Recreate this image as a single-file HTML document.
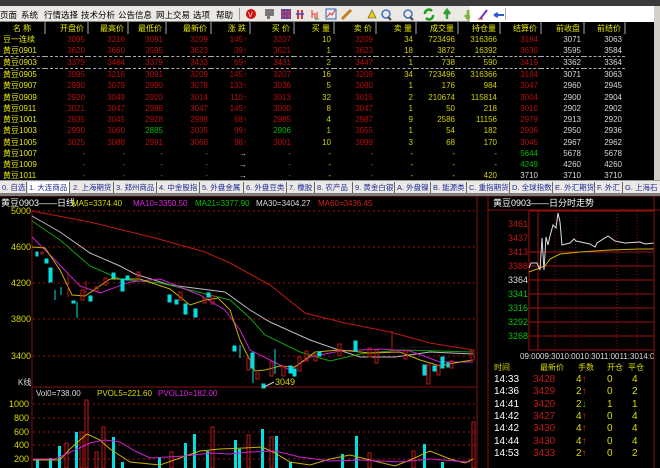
<!DOCTYPE html>
<html><head><meta charset="utf-8"><style>
*{margin:0;padding:0;box-sizing:border-box}
body{width:660px;height:468px;background:#000;overflow:hidden;position:relative;font-family:"Liberation Sans","Noto Sans CJK SC",sans-serif;font-size:9px}
.a{position:absolute;white-space:nowrap}
#top{left:0;top:0;width:660px;height:6px;background:#3a3a3a}
#menu{left:0;top:6px;width:660px;height:16px;background:#ece9e4;border-bottom:1px solid #888}
#menu span{position:absolute;top:3px;font-size:8.5px;color:#000;letter-spacing:0}
#tbl{left:0;top:22px;width:654px}
table{border-collapse:collapse;table-layout:fixed}
td{height:11.25px;line-height:11px;text-align:right;padding-right:3px;font-size:8px;font-family:"Liberation Sans","Noto Sans CJK SC",sans-serif}
tr.h td{height:12px;color:#e8e800;background:#000;border-right:2px solid #555;font-size:8px}
td.n{text-align:left;padding-left:3px;color:#e8e800}
.r{color:#b80c0c}.y{color:#d0d000}.w{color:#d8d8d8}.g{color:#00b800}
tr.sel td{border-top:1px dashed #aaa;border-bottom:1px dashed #aaa}
#sb{left:654px;top:6px;width:6px;height:174px;background:#d4d0c8}
#tabs{left:0;top:180px;width:660px;height:13px;background:#ece9e4;border-top:1px solid #999;overflow:hidden}
#tabs span{position:absolute;top:1px;height:11px;font-size:7.5px;color:#1a2a9a;border-right:1px solid #666;padding:0 1px;line-height:11px;overflow:hidden}
</style></head><body>
<div class="a" id="top"></div>
<div class="a" id="menu">
<span style="left:0">页面</span><span style="left:21px">系统</span><span style="left:44px">行情选择</span><span style="left:81px">技术分析</span><span style="left:118px">公告信息</span><span style="left:156px">网上交易</span><span style="left:193px">选项</span><span style="left:216px">帮助</span>
</div>
<div class="a" style="left:470px;top:6px;width:186px;height:16px;background:#fff"></div>
<div class="a" style="left:239px;top:8px;width:1px;height:12px;background:#999"></div>
<svg class="a" style="left:240px;top:6px" width="230" height="16">
<circle cx="11" cy="8" r="5" fill="#d01010"/><text x="8" y="11" font-size="7" fill="#fff" font-family="Liberation Sans">V</text>
<rect x="25" y="3" width="9" height="7" fill="#777"/><rect x="27" y="10" width="3" height="3" fill="#777"/>
<rect x="41" y="3" width="10" height="10" fill="#2050d0"/><path d="M43 3v10M46 3v10M49 3v10M41 6h10M41 10h10" stroke="#f33" stroke-width="1"/>
<path d="M58 4v9M62 4v9" stroke="#e03030" stroke-width="2"/><path d="M56 8h8" stroke="#3050e0" stroke-width="1.5"/>
<path d="M72 12V4M72 8h3v5M77 6v7" stroke="#e03030" fill="none"/><path d="M75 13h4" stroke="#2a2"/>
<rect x="86" y="3" width="10" height="10" fill="none" stroke="#3060c0"/><path d="M87 11l3-4 2 2 3-5" stroke="#e03030" fill="none"/>
<path d="M102 13l9-9" stroke="#c08020" stroke-width="3"/>
<path d="M128 12l4-8 4 8z" fill="#f0d000" stroke="#444" stroke-width=".6"/>
<circle cx="146" cy="8" r="4" fill="none" stroke="#4070c0" stroke-width="1.5"/><path d="M148 11l3 3" stroke="#444" stroke-width="2"/>
<circle cx="168" cy="8" r="4" fill="none" stroke="#4070c0" stroke-width="1.5"/><path d="M170 11l3 3" stroke="#444" stroke-width="2"/>
<path d="M185 8a4 4 0 0 1 7-3M193 9a4 4 0 0 1-7 3" stroke="#20a020" stroke-width="2.5" fill="none"/>
<path d="M207 13V6M204 8l3-4 3 4" stroke="#30a030" stroke-width="2.5" fill="none"/>
<path d="M228 4v7M225 9l3 4 3-4" stroke="#80b040" stroke-width="2.5" fill="none"/>
</svg>
<svg class="a" style="left:470px;top:6px" width="60" height="16"><path d="M10 13l7-9" stroke="#7030c0" stroke-width="2"/><path d="M8 13h5" stroke="#d02020"/><path d="M24 9h10M24 9l4-2M24 9l4 2" stroke="#3060d0" stroke-width="2"/></svg>
<div class="a" style="left:505px;top:8px;width:1px;height:12px;background:#aaa"></div>
<div class="a" id="sb"></div>

<div class="a" id="tbl"><table>
<colgroup><col style="width:45px"><col style="width:43px"><col style="width:40px"><col style="width:38px"><col style="width:45px"><col style="width:39px"><col style="width:44px"><col style="width:40px"><col style="width:42px"><col style="width:40px"><col style="width:42px"><col style="width:42px"><col style="width:41px"><col style="width:43px"><col style="width:41px"></colgroup>
<tr class="h"><td class="n" style="text-align:center">名 称</td><td>开盘价</td><td>最高价</td><td>最低价</td><td>最新价</td><td>涨 跌</td><td>买 价</td><td>买 量</td><td>卖 价</td><td>卖 量</td><td>成交量</td><td>持仓量</td><td>结算价</td><td>前收盘</td><td>前结价</td></tr>
<tr><td class="n">豆一连续</td><td class="r">3095</td><td class="r">3216</td><td class="r">3091</td><td class="r">3209</td><td class="r">145↑</td><td class="r">3207</td><td class="y">10</td><td class="r">3209</td><td class="y">34</td><td class="y">723496</td><td class="y">316366</td><td class="r">3184</td><td class="w">3071</td><td class="w">3063</td></tr>
<tr><td class="n">黄豆0901</td><td class="r">3620</td><td class="r">3660</td><td class="r">3595</td><td class="r">3623</td><td class="r">39↑</td><td class="r">3621</td><td class="y">1</td><td class="r">3623</td><td class="y">18</td><td class="y">3872</td><td class="y">16392</td><td class="r">3630</td><td class="w">3595</td><td class="w">3584</td></tr>
<tr class="sel"><td class="n">黄豆0903</td><td class="r">3379</td><td class="r">3484</td><td class="r">3379</td><td class="r">3433</td><td class="r">69↑</td><td class="r">3431</td><td class="y">2</td><td class="r">3447</td><td class="y">1</td><td class="y">738</td><td class="y">590</td><td class="r">3419</td><td class="w">3362</td><td class="w">3364</td></tr>
<tr><td class="n">黄豆0905</td><td class="r">3095</td><td class="r">3216</td><td class="r">3091</td><td class="r">3209</td><td class="r">145↑</td><td class="r">3207</td><td class="y">16</td><td class="r">3209</td><td class="y">34</td><td class="y">723496</td><td class="y">316366</td><td class="r">3184</td><td class="w">3071</td><td class="w">3063</td></tr>
<tr><td class="n">黄豆0907</td><td class="r">2990</td><td class="r">3079</td><td class="r">2990</td><td class="r">3078</td><td class="r">133↑</td><td class="r">3036</td><td class="y">5</td><td class="r">3080</td><td class="y">1</td><td class="y">176</td><td class="y">984</td><td class="r">3047</td><td class="w">2960</td><td class="w">2945</td></tr>
<tr><td class="n">黄豆0909</td><td class="r">2920</td><td class="r">3049</td><td class="r">2920</td><td class="r">3014</td><td class="r">110↑</td><td class="r">3013</td><td class="y">32</td><td class="r">3015</td><td class="y">2</td><td class="y">210674</td><td class="y">115814</td><td class="r">3004</td><td class="w">2900</td><td class="w">2904</td></tr>
<tr><td class="n">黄豆0911</td><td class="r">3021</td><td class="r">3047</td><td class="r">2988</td><td class="r">3047</td><td class="r">145↑</td><td class="r">3000</td><td class="y">8</td><td class="r">3047</td><td class="y">1</td><td class="y">50</td><td class="y">218</td><td class="r">3010</td><td class="w">2902</td><td class="w">2902</td></tr>
<tr><td class="n">黄豆1001</td><td class="r">2935</td><td class="r">3045</td><td class="r">2928</td><td class="r">2988</td><td class="r">68↑</td><td class="r">2985</td><td class="y">4</td><td class="r">2987</td><td class="y">9</td><td class="y">2586</td><td class="y">11156</td><td class="r">2979</td><td class="w">2913</td><td class="w">2920</td></tr>
<tr><td class="n">黄豆1003</td><td class="r">2990</td><td class="r">3060</td><td class="g">2885</td><td class="r">3035</td><td class="r">99↑</td><td class="g">2906</td><td class="y">1</td><td class="r">3055</td><td class="y">1</td><td class="y">54</td><td class="y">182</td><td class="r">2906</td><td class="w">2950</td><td class="w">2936</td></tr>
<tr><td class="n">黄豆1005</td><td class="r">3025</td><td class="r">3088</td><td class="r">2991</td><td class="r">3060</td><td class="r">98↑</td><td class="r">3001</td><td class="y">10</td><td class="r">3099</td><td class="y">3</td><td class="y">68</td><td class="y">170</td><td class="r">3045</td><td class="w">2967</td><td class="w">2962</td></tr>
<tr><td class="n">黄豆1007</td><td class="g">-</td><td class="g">-</td><td class="g">-</td><td class="g">-</td><td class="w">→</td><td class="g">-</td><td class="y">-</td><td class="g">-</td><td class="y">-</td><td class="y">-</td><td class="y">-</td><td class="g">5644</td><td class="w">5678</td><td class="w">5678</td></tr>
<tr><td class="n">黄豆1009</td><td class="g">-</td><td class="g">-</td><td class="g">-</td><td class="g">-</td><td class="w">→</td><td class="g">-</td><td class="y">-</td><td class="g">-</td><td class="y">-</td><td class="y">-</td><td class="y">-</td><td class="g">4249</td><td class="w">4260</td><td class="w">4260</td></tr>
<tr><td class="n">黄豆1011</td><td class="g">-</td><td class="g">-</td><td class="g">-</td><td class="g">-</td><td class="w">→</td><td class="g">-</td><td class="y">-</td><td class="g">-</td><td class="y">-</td><td class="y">-</td><td class="y">420</td><td class="w">3710</td><td class="w">3710</td><td class="w">3710</td></tr>
</table></div>

<div class="a" id="tabs">
<span style="left:1px;width:26px">0. 自选</span><span style="left:28px;width:42px;background:#fff">1. 大连商品</span><span style="left:72px;width:42px">2. 上海期货</span><span style="left:115px;width:42px">3. 郑州商品</span><span style="left:158px;width:42px">4. 中金股指</span><span style="left:201px;width:43px">5. 外盘金属</span><span style="left:245px;width:42px">6. 外盘豆类</span><span style="left:288px;width:27px">7. 橡胶</span><span style="left:316px;width:37px">8. 农产品</span><span style="left:354px;width:41px">9. 黄金白银</span><span style="left:396px;width:35px">A. 外盘镍</span><span style="left:432px;width:35px">B. 能源类</span><span style="left:468px;width:42px">C. 重指期货</span><span style="left:511px;width:42px">D. 全球指数</span><span style="left:554px;width:41px">E. 外汇期货</span><span style="left:596px;width:27px">F. 外汇</span><span style="left:624px;width:40px">G. 上海石</span>
</div>
<div class="a" style="left:0;top:193px;width:660px;height:3px;background:#808080"></div>

<svg class="a" style="left:0;top:196px" width="660" height="272" font-family="Liberation Sans,Noto Sans CJK SC,sans-serif">
<g transform="translate(0,-196)">
<text x="1" y="206" fill="#fff" font-size="9">黄豆0903——日线</text>
<text x="72" y="206" fill="#dada00" font-size="8">MA5=3374.40</text>
<text x="133" y="206" fill="#e020e0" font-size="8">MA10=3350.50</text>
<text x="195" y="206" fill="#00c000" font-size="8">MA21=3377.90</text>
<text x="256" y="206" fill="#ddd" font-size="8">MA30=3404.27</text>
<text x="318" y="206" fill="#d02020" font-size="8">MA60=3436.45</text>
<path d="M32 210V468M32 387H477M477 196V468M488 196V468M0 196H660M488 210H660" stroke="#8a1010" stroke-width="1" fill="none"/>
<g stroke="#a01010" stroke-dasharray="2,3" stroke-width="1">
<path d="M33 211H475M33 247H475M33 283H475M33 319H475M33 356H475M33 404H475M33 418H475M33 432H475M33 445H475M33 459H475"/>
</g>
<g fill="#dada00" font-size="9" text-anchor="end">
<text x="31" y="214">5000</text><text x="31" y="250">4600</text><text x="31" y="286">4200</text><text x="31" y="322">3800</text><text x="31" y="359">3400</text>
<text x="29" y="407">1000</text><text x="29" y="421">800</text><text x="29" y="435">600</text><text x="29" y="448">400</text><text x="29" y="462">200</text>
</g>
<text x="18" y="385" fill="#ddd" font-size="8">K线</text>
<text x="36" y="396" fill="#ddd" font-size="8">Vol0=738.00</text>
<text x="97" y="396" fill="#dada00" font-size="8">PVOL5=221.60</text>
<text x="158" y="396" fill="#e020e0" font-size="8">PVOL10=182.00</text>
<g fill="none" stroke-width="1">
<polyline stroke="#c01818" points="32,211 90,222 155,238 205,252 230,263 270,285 305,313 345,323 390,332 430,343 473,350"/>
<polyline stroke="#bbb" points="32,216 60,232 90,253 120,266 135,274 170,285 225,292 250,310 270,322 310,340 330,347 360,357 395,357 430,352 473,354"/>
<polyline stroke="#10a010" points="32,221 60,240 90,266 120,279 160,283 190,290 230,300 250,318 265,335 300,352 330,361 360,354 400,350 440,351 473,352"/>
<polyline stroke="#d020d0" points="32,237 55,260 80,286 100,293 130,282 160,279 200,295 225,310 240,330 250,350 270,360 290,370 310,357 340,351 380,349 410,351 440,362 473,362"/>
<polyline stroke="#c8b000" points="32,247 45,248 60,270 72,295 85,296 110,279 140,279 170,289 190,305 205,300 218,298 230,310 240,340 255,371 265,370 280,366 295,367 315,352 340,350 370,353 400,352 420,360 440,366 460,362 473,360"/>
</g>
<g stroke="#00e0e0" fill="#00e0e0">
<rect x="36" y="252" width="2" height="4"/><rect x="45" y="259" width="3" height="4"/><rect x="49" y="268" width="3" height="14"/><path d="M55 290v10M61 287v8M77 302v16"/><rect x="72" y="301" width="3" height="2"/><rect x="89" y="296" width="3" height="5"/><rect x="112" y="273" width="3" height="5"/><rect x="121" y="279" width="3" height="12"/><rect x="126" y="276" width="3" height="4"/><rect x="168" y="295" width="3" height="7"/><rect x="175" y="300" width="3" height="4"/><rect x="184" y="304" width="3" height="10"/><rect x="194" y="309" width="3" height="8"/><rect x="207" y="293" width="3" height="4"/><rect x="233" y="346" width="3" height="5"/><path d="M240 345v13M253 353v30M275 349v25"/><rect x="251" y="353" width="3" height="15"/><rect x="262" y="384" width="3" height="4"/><rect x="289" y="366" width="3" height="7"/><rect x="293" y="369" width="3" height="7"/><rect x="318" y="352" width="3" height="4"/><rect x="354" y="341" width="3" height="10"/><rect x="423" y="365" width="3" height="10"/><rect x="433" y="366" width="3" height="5"/><rect x="441" y="357" width="3" height="11"/><rect x="447" y="363" width="3" height="4"/>
</g>
<g stroke="#c01818" fill="none">
<rect x="41" y="252" width="2" height="2"/><path d="M68 272v25"/><rect x="81" y="290" width="3" height="10"/><path d="M86 281v12"/><rect x="95" y="287" width="3" height="4"/><rect x="104" y="278" width="3" height="7"/><rect x="137" y="272" width="3" height="5"/><rect x="179" y="292" width="3" height="8"/><rect x="203" y="298" width="3" height="5"/><rect x="211" y="296" width="3" height="8"/><rect x="247" y="358" width="3" height="12"/><rect x="256" y="373" width="3" height="6"/><rect x="270" y="362" width="3" height="14"/><rect x="282" y="366" width="3" height="10"/><rect x="298" y="357" width="3" height="14"/><rect x="305" y="351" width="3" height="10"/><rect x="314" y="354" width="3" height="7"/><rect x="338" y="344" width="3" height="12"/><rect x="368" y="348" width="3" height="9"/><rect x="375" y="350" width="3" height="13"/><path d="M392 331v22"/><rect x="404" y="351" width="3" height="8"/><rect x="427" y="365" width="3" height="19"/><rect x="437" y="365" width="3" height="10"/><rect x="450" y="361" width="3" height="7"/><rect x="471" y="350" width="3" height="10"/>
</g>
<path d="M264 387l10-5" stroke="#ccc"/><text x="275" y="385" fill="#dada00" font-size="9">3049</text>
<g fill="#00e0e0">
<rect x="36" y="459" width="3" height="9"/><rect x="49" y="458" width="3" height="10"/><rect x="58" y="446" width="3" height="22"/><rect x="75" y="432" width="3" height="36"/><rect x="112" y="437" width="3" height="31"/><rect x="121" y="462" width="3" height="6"/><rect x="158" y="457" width="3" height="11"/><rect x="184" y="443" width="3" height="25"/><rect x="193" y="434" width="3" height="34"/><rect x="206" y="451" width="3" height="17"/><rect x="234" y="440" width="3" height="28"/><rect x="238" y="449" width="3" height="19"/><rect x="261" y="429" width="3" height="39"/><rect x="275" y="436" width="3" height="32"/><rect x="289" y="462" width="3" height="6"/><rect x="341" y="454" width="3" height="14"/><rect x="355" y="436" width="3" height="32"/><rect x="423" y="444" width="3" height="24"/><rect x="441" y="462" width="3" height="6"/></g>
<g fill="none" stroke="#c01818">
<rect x="65" y="443" width="3" height="25"/><rect x="80" y="432" width="3" height="36"/><rect x="85" y="400" width="3" height="68"/><rect x="95" y="452" width="3" height="16"/><rect x="102" y="427" width="3" height="41"/><rect x="170" y="452" width="3" height="16"/><rect x="211" y="427" width="3" height="41"/><rect x="247" y="435" width="3" height="33"/><rect x="270" y="437" width="3" height="31"/><rect x="368" y="453" width="3" height="15"/><rect x="412" y="451" width="3" height="17"/><rect x="472" y="422" width="3" height="46"/></g>
<polyline fill="none" stroke="#c8b000" points="33,460 60,460 70,449 80,440 87,434 100,440 110,449 130,462 160,465 180,458 200,451 220,449 245,448 262,447 275,453 290,462 310,465 330,459 350,455 370,460 395,466 410,460 430,451 450,459 465,463 473,459"/>
<polyline fill="none" stroke="#d020d0" points="33,459 55,459 75,450 90,443 105,440 120,442 135,451 150,458 185,456 210,453 230,454 250,452 275,451 300,457 330,461 360,460 400,462 430,459 455,461 470,462"/>

<text x="493" y="206" fill="#fff" font-size="9">黄豆0903——日分时走势</text>
<g fill="none"><path d="M529 211V350H654M529 211H654M538 211V350M529 252H654M529 266H654M529 280H654M529 294H654M529 308H654M529 322H654M529 336H654" stroke="#a01010"/>
<path d="M555 211V350M576 211V350M617 211V350M637 211V350" stroke="#a01010" stroke-dasharray="1,2"/></g>
<g font-size="9" text-anchor="end"><text x="528" y="227" fill="#c01818">3461</text><text x="528" y="241" fill="#c01818">3437</text><text x="528" y="255" fill="#c01818">3413</text><text x="528" y="269" fill="#c01818">3388</text><text x="528" y="283" fill="#ddd">3364</text><text x="528" y="297" fill="#10c010">3341</text><text x="528" y="311" fill="#10c010">3316</text><text x="528" y="325" fill="#10c010">3292</text><text x="528" y="339" fill="#10c010">3268</text></g>
<polyline fill="none" stroke="#c8b000" points="529,272 545,266 550,259 560,254 580,252 610,250 640,249 654,249"/>
<polyline fill="none" stroke="#ddd" points="529,268 531,263 537,263 540,270 542,238 544,270 546,237 548,245 550,236 553,225 556,228 558,213 560,222 562,245 570,243 574,239 576,241 590,244 595,247 597,243 608,236 615,241 625,243 640,242 645,244 654,243"/>
<text x="520" y="359" fill="#ddd" font-size="8">09:0009:3010:0010:3011:0011:3014:0</text>
<g font-size="8" fill="#dada00"><text x="494" y="370">时间</text><text x="540" y="370">最新价</text><text x="578" y="370">手数</text><text x="607" y="370">开仓</text><text x="628" y="370">平仓</text></g>
<g font-size="10">
<g fill="#fff"><text x="494" y="382">14:33</text><text x="494" y="394">14:36</text><text x="494" y="407">14:41</text><text x="494" y="419">14:42</text><text x="494" y="431">14:42</text><text x="494" y="444">14:44</text><text x="494" y="456">14:53</text></g>
<g fill="#c01818"><text x="533" y="382">3428</text><text x="533" y="394">3429</text><text x="533" y="407">3420</text><text x="533" y="419">3427</text><text x="533" y="431">3430</text><text x="533" y="444">3430</text><text x="533" y="456">3433</text></g>
<g fill="#dada00"><text x="576" y="382">4<tspan fill="#e02020">↑</tspan></text><text x="576" y="394">2<tspan fill="#e02020">↑</tspan></text><text x="576" y="407">2<tspan fill="#10c010">↓</tspan></text><text x="576" y="419">4<tspan fill="#e02020">↑</tspan></text><text x="576" y="431">4<tspan fill="#e02020">↑</tspan></text><text x="576" y="444">4<tspan fill="#e02020">↑</tspan></text><text x="576" y="456">2<tspan fill="#e02020">↑</tspan></text>
<text x="607" y="382">0</text><text x="607" y="394">0</text><text x="607" y="407">1</text><text x="607" y="419">0</text><text x="607" y="431">0</text><text x="607" y="444">0</text><text x="607" y="456">0</text>
<text x="632" y="382">4</text><text x="632" y="394">2</text><text x="632" y="407">1</text><text x="632" y="419">4</text><text x="632" y="431">4</text><text x="632" y="444">4</text><text x="632" y="456">2</text></g>
</g>
<path d="M654 196V468" stroke="#8a1010"/>
</g></svg>
</body></html>
